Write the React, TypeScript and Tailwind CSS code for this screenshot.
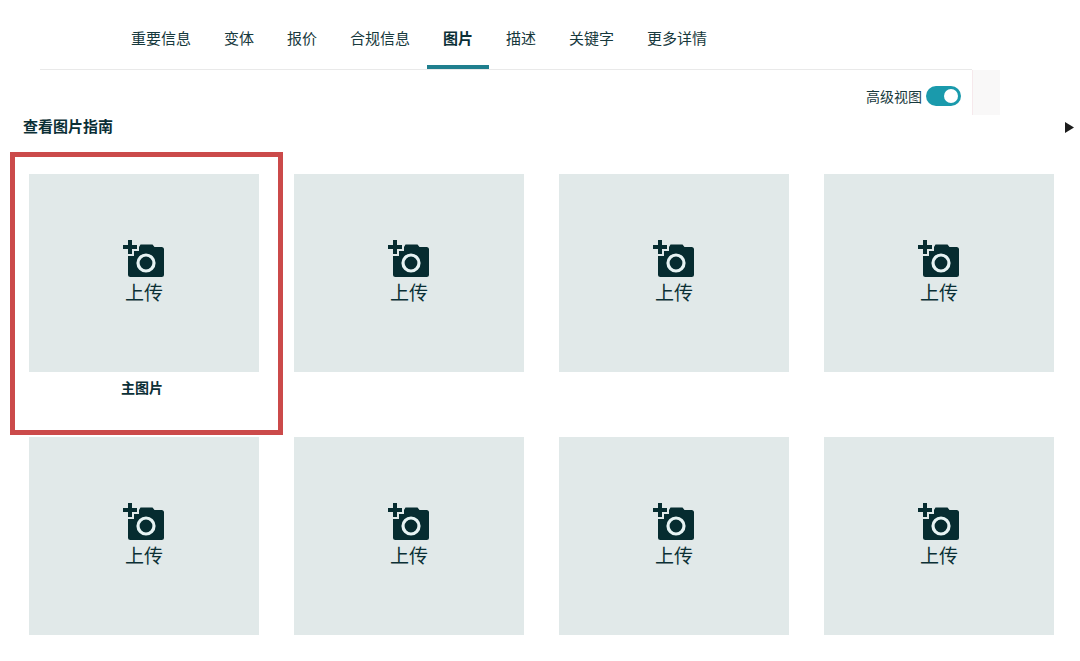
import React, { useState } from 'react';
import clsx from 'clsx';

const TABS = ['重要信息', '变体', '报价', '合规信息', '图片', '描述', '关键字', '更多详情'];

interface Slot {
  id: number;
  caption?: string;
  highlighted?: boolean;
}

const SLOTS: Slot[] = [
  { id: 1, caption: '主图片', highlighted: true },
  { id: 2 },
  { id: 3 },
  { id: 4 },
  { id: 5 },
  { id: 6 },
  { id: 7 },
  { id: 8 },
];

const AddCameraIcon = () => (
  <svg width="42" height="38" viewBox="0 0 42 38" fill="none" aria-hidden="true">
    <path
      d="M16 7l1.500-2.500h12L31.500 7h7A2.500 2.500 0 0 1 41 9.500v25a2.500 2.500 0 0 1-2.500 2.500h-31A2.500 2.500 0 0 1 5 34.500V16h6v-5h5z"
      fill="#062c30"
    />
    <circle cx="23" cy="23" r="8" stroke="#e6f3f3" strokeWidth="3.200" />
    <path d="M7 0v14M0 7h14" stroke="#062c30" strokeWidth="4" />
  </svg>
);

const UploadTile = ({ slot }: { slot: Slot }) => (
  <div className="relative">
    <button
      type="button"
      className="flex h-[198px] w-full cursor-pointer flex-col items-center justify-center bg-[#e1e9e9] text-[#0b3035]"
    >
      <AddCameraIcon />
      <span className="text-[19px] leading-7">上传</span>
    </button>
    {slot.caption && (
      <p className="pt-[3px] pr-1 pb-px text-center text-sm leading-6 font-bold text-[#0b2f36]">{slot.caption}</p>
    )}
    {slot.highlighted && (
      <div className="pointer-events-none absolute -top-[22px] -right-6 -bottom-[35px] -left-[19px] border-5 border-[#cb4a4a]" />
    )}
  </div>
);

const App = () => {
  const [activeTab, setActiveTab] = useState('图片');
  const [advanced, setAdvanced] = useState(true);

  return (
    <main className="min-h-screen bg-white font-['Noto_Sans_CJK_SC',sans-serif] text-[#17393d]">
      <nav className="mr-[108px] ml-10 flex h-[70px] gap-px border-b border-[#e9e9e9] pl-[75px]">
        {TABS.map((tab) => (
          <button
            key={tab}
            type="button"
            onClick={() => setActiveTab(tab)}
            className={clsx(
              'cursor-pointer border-b-4 px-4 pt-4 pb-1 text-[15px] whitespace-nowrap',
              tab === activeTab ? 'border-[#1f7f8e] font-bold text-[#0b2f36]' : 'border-transparent'
            )}
          >
            {tab}
          </button>
        ))}
      </nav>

      <div className="mr-20 flex h-[45px] justify-end">
        <label className="flex cursor-pointer items-center gap-1 pt-2 pr-[11px] pb-px text-sm">
          高级视图
          <input
            type="checkbox"
            role="switch"
            checked={advanced}
            onChange={(e) => setAdvanced(e.target.checked)}
            className="flex h-5 w-[35px] cursor-pointer appearance-none items-center rounded-full bg-gray-400 px-[3px] before:size-[14px] before:rounded-full before:bg-white checked:justify-end checked:bg-[#1a9aac]"
          />
        </label>
        <div className="w-7 border-l border-[#f6e9ec] bg-[#f9f8f8]" />
      </div>

      <div className="flex h-6 items-center justify-between pr-[6px] pl-[23px]">
        <h2 className="pb-0.5 text-[15px] font-bold text-[#0b2f36]">查看图片指南</h2>
        <button type="button" aria-label="查看图片指南" className="cursor-pointer text-[#1c1c1c]">
          <svg width="9" height="11" viewBox="0 0 9 11" fill="currentColor" aria-hidden="true">
            <path d="M0 0l9 5.500L0 11z" />
          </svg>
        </button>
      </div>

      <section className="grid grid-cols-4 gap-x-[35px] gap-y-[37px] pt-[35px] pr-[26px] pb-6 pl-[29px]">
        {SLOTS.map((slot) => (
          <UploadTile key={slot.id} slot={slot} />
        ))}
      </section>
    </main>
  );
};

export default App;
